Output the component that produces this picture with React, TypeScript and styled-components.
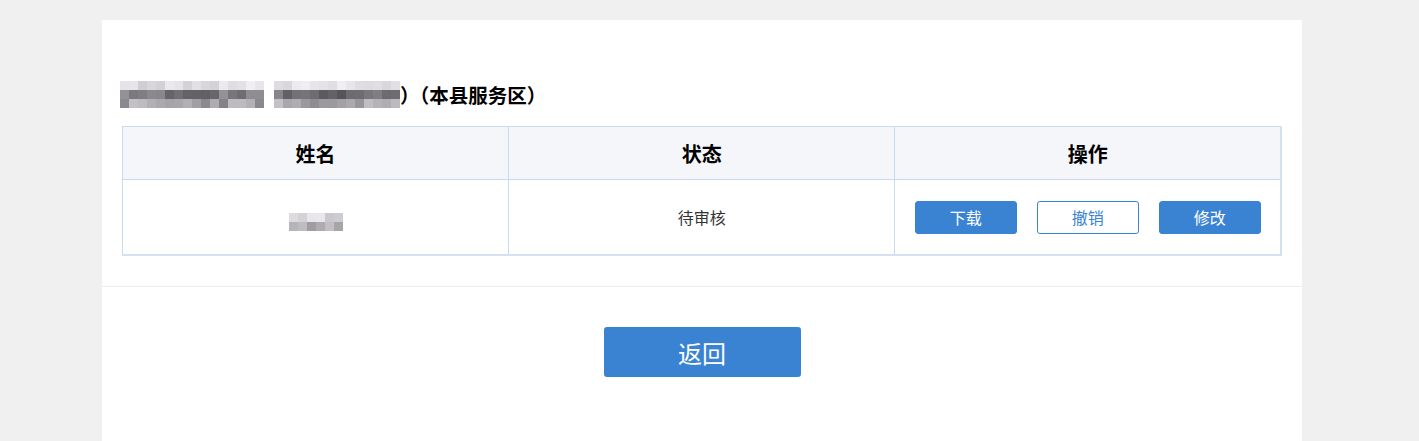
import React from 'react';
import styled, { createGlobalStyle } from 'styled-components';

const GlobalStyle = createGlobalStyle`
  html, body { margin: 0; padding: 0; background: #f0f0f0; }
  body { font-family: "Noto Sans CJK SC", "Noto Sans", "Liberation Sans", sans-serif; }
`;

const Panel = styled.div`
  width: 1200px;
  min-height: 421px;
  margin: 20px 0 0 102px;
  background: #fff;
`;

const Section = styled.div`
  padding: 54px 20px 30px;
  border-bottom: 1px solid #ededed;
`;

const Title = styled.h3`
  margin: 0 0 12px -2px;
  height: 40px;
  display: flex;
  align-items: center;
  font-size: 19.5px;
  font-weight: 700;
  color: #000;
`;

const MosaicGrid = styled.span<{ $cols: number; $cell: number; $gap?: number }>`
  display: inline-grid;
  grid-template-columns: repeat(${p => p.$cols}, ${p => p.$cell}px);
  grid-auto-rows: ${p => p.$cell}px;
  margin-right: ${p => p.$gap ?? 0}px;
  filter: blur(0.4px);
`;

const Cell = styled.span<{ $c: string }>`
  background: ${p => p.$c};
`;

// pseudo random greys for the blurred bits
const greys = (seed: number, n: number, lo: number, hi: number) => {
  const out: string[] = [];
  let s = seed;
  for (let i = 0; i < n; i++) {
    s = (s * 9301 + 49297) % 233280;
    const v = Math.round(lo + (s / 233280) * (hi - lo));
    out.push(`rgb(${v},${v - 2},${v + 2})`);
  }
  return out;
};

const Mosaic: React.FC<{ cols: number; seed: number; cell?: number; gap?: number; light?: boolean }> = ({ cols, seed, cell = 9, gap, light }) => {
  const rows = light
    ? [greys(seed, cols, 200, 240), greys(seed + 3, cols, 150, 200)]
    : [greys(seed, cols, 205, 240), greys(seed + 7, cols, 85, 150), greys(seed + 11, cols, 130, 200)];
  return (
    <MosaicGrid $cols={cols} $cell={cell} $gap={gap}>
      {rows.flat().map((c, i) => <Cell key={i} $c={c} />)}
    </MosaicGrid>
  );
};

const Table = styled.table`
  width: 100%;
  border-collapse: collapse;
  border: 1px solid #c9dcef;
  border-right-width: 2px;
  border-bottom-width: 2px;
  border-right-color: #d4e2f0;
  border-bottom-color: #d4e2f0;
  table-layout: fixed;
`;

const Th = styled.th`
  height: 52px;
  background: #f5f6fa;
  border: 1px solid #c9dcef;
  font-size: 20px;
  font-weight: 700;
  color: #000;
  padding: 0;
`;

const Td = styled.td`
  height: 74px;
  border: 1px solid #c9dcef;
  text-align: center;
  font-size: 16px;
  color: #333;
  padding: 0;
`;

const Actions = styled.div`
  display: flex;
  justify-content: center;
  gap: 20px;
`;

const SmallBtn = styled.button<{ $ghost?: boolean }>`
  width: 102px;
  height: 33px;
  border-radius: 3px;
  border: 1px solid #3a83d3;
  background: ${p => (p.$ghost ? '#fff' : '#3a83d3')};
  color: ${p => (p.$ghost ? '#3a83d3' : '#fff')};
  font-family: inherit;
  font-size: 16px;
  padding: 0;
  cursor: pointer;
`;

const Footer = styled.div`
  display: flex;
  justify-content: center;
  padding-top: 40px;
`;

const BackBtn = styled.button`
  width: 197px;
  height: 50px;
  border: none;
  border-radius: 3px;
  background: #3a83d3;
  color: #fff;
  font-family: inherit;
  font-size: 24px;
  cursor: pointer;
`;

export default function App() {
  return (
    <>
      <GlobalStyle />
      <Panel>
        <Section>
          <Title>
            <Mosaic cols={16} seed={12} gap={10} />
            <Mosaic cols={14} seed={57} />
            <span>）（本县服务区）</span>
          </Title>
          <Table>
            <thead>
              <tr>
                <Th>姓名</Th>
                <Th>状态</Th>
                <Th>操作</Th>
              </tr>
            </thead>
            <tbody>
              <tr>
                <Td><Mosaic cols={6} seed={33} light /></Td>
                <Td>待审核</Td>
                <Td>
                  <Actions>
                    <SmallBtn>下载</SmallBtn>
                    <SmallBtn $ghost>撤销</SmallBtn>
                    <SmallBtn>修改</SmallBtn>
                  </Actions>
                </Td>
              </tr>
            </tbody>
          </Table>
        </Section>
        <Footer>
          <BackBtn>返回</BackBtn>
        </Footer>
      </Panel>
    </>
  );
}
